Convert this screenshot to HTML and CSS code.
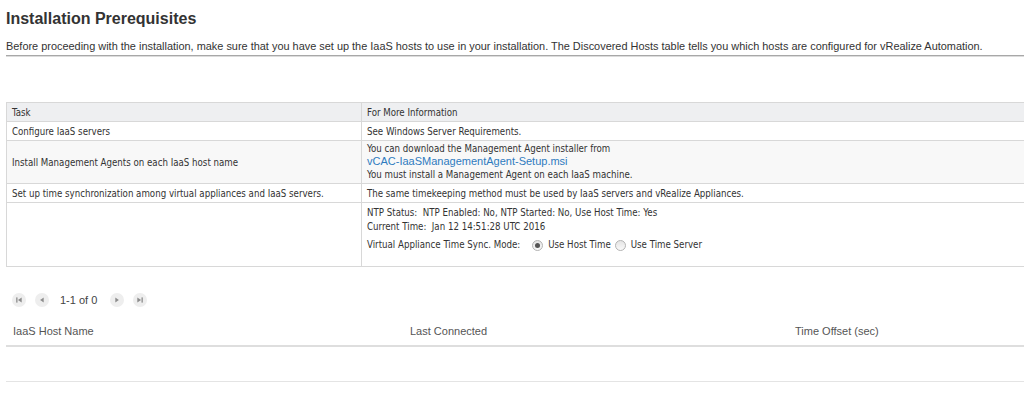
FILE: index.html
```html
<!DOCTYPE html>
<html>
<head>
<meta charset="utf-8">
<link rel="stylesheet" href="styles.css">
</head>
<body>
<main class="page">
  <h1 class="title">Installation Prerequisites</h1>
  <p class="intro">Before proceeding with the installation, make sure that you have set up the IaaS hosts to use in your installation. The Discovered Hosts table tells you which hosts are configured for vRealize Automation.</p>
  <hr class="rule">

  <table class="prereq">
    <thead>
      <tr><th class="col-task">Task</th><th>For More Information</th></tr>
    </thead>
    <tbody>
      <tr><td>Configure IaaS servers</td><td>See Windows Server Requirements.</td></tr>
      <tr class="alt">
        <td>Install Management Agents on each IaaS host name</td>
        <td class="multi">You can download the Management Agent installer from<br><a class="link" href="#">vCAC-IaaSManagementAgent-Setup.msi</a><br>You must install a Management Agent on each IaaS machine.</td>
      </tr>
      <tr><td>Set up time synchronization among virtual appliances and IaaS servers.</td><td>The same timekeeping method must be used by IaaS servers and vRealize Appliances.</td></tr>
      <tr class="ntp">
        <td></td>
        <td>
          <div class="ntp-line">NTP Status:&nbsp; NTP Enabled: No, NTP Started: No, Use Host Time: Yes</div>
          <div class="ntp-line">Current Time:&nbsp; Jan 12 14:51:28 UTC 2016</div>
          <div class="ntp-line sync">
            <span class="sync-label">Virtual Appliance Time Sync. Mode:</span>
            <span class="radio checked"></span><span class="radio-text">Use Host Time</span>
            <span class="radio"></span><span class="radio-text">Use Time Server</span>
          </div>
        </td>
      </tr>
    </tbody>
  </table>

  <div class="pager">
    <span class="pbtn"><svg viewBox="0 0 10 10" width="10" height="10"><rect x="2.2" y="2.4" width="1.3" height="5.2" fill="#8c8c8c"/><path d="M7.7 2.4 L3.9 5 L7.7 7.6 Z" fill="#8c8c8c"/></svg></span>
    <span class="pbtn"><svg viewBox="0 0 10 10" width="10" height="10"><path d="M6.7 2.4 L3.1 5 L6.7 7.6 Z" fill="#8c8c8c"/></svg></span>
    <span class="pcount">1-1 of 0</span>
    <span class="pbtn"><svg viewBox="0 0 10 10" width="10" height="10"><path d="M3.3 2.4 L6.9 5 L3.3 7.6 Z" fill="#8c8c8c"/></svg></span>
    <span class="pbtn"><svg viewBox="0 0 10 10" width="10" height="10"><path d="M2.3 2.4 L6.1 5 L2.3 7.6 Z" fill="#8c8c8c"/><rect x="6.5" y="2.4" width="1.3" height="5.2" fill="#8c8c8c"/></svg></span>
  </div>

  <div class="hosts">
    <div class="hosts-head">
      <span class="h-name">IaaS Host Name</span>
      <span class="h-last">Last Connected</span>
      <span class="h-offset">Time Offset (sec)</span>
    </div>
    <div class="hosts-empty"></div>
  </div>
</main>
</body>
</html>
```

FILE: styles.css
```css
html, body {
  margin: 0;
  padding: 0;
  background: #fff;
  overflow: hidden;
}

.page {
  width: 1030px;
  padding-left: 6px;
  font-family: "Liberation Sans", Arial, sans-serif;
  color: #333;
}

.title {
  margin: 0;
  padding-top: 9px;
  font-size: 16px;
  font-weight: bold;
  line-height: 19px;
  color: #333;
}

.intro {
  margin: 0;
  padding-top: 12px;
  font-size: 10.93px;
  line-height: 13px;
  color: #333;
}

.rule {
  margin: 2px 0 0 0;
  border: 0;
  border-top: 1px solid #a8a8a8;
  border-bottom: 1px solid #dcdcdc;
  height: 0;
}

.prereq {
  margin-top: 45px;
  width: 1030px;
  border-collapse: collapse;
  font-family: "DejaVu Sans Condensed", "DejaVu Sans", sans-serif;
  font-size: 9.65px;
  color: #333;
  border: 1px solid #d8d8d8;
}

.prereq th,
.prereq td {
  border: 1px solid #d8d8d8;
  padding: 0 5px;
  text-align: left;
  font-weight: normal;
  height: 18px;
  vertical-align: middle;
}

.prereq th {
  background: #eeeff1;
}

.col-task {
  width: 344px;
}

.prereq tr.alt td {
  background: #f8f8f8;
  height: 42px;
}

.multi {
  line-height: 12.5px;
}

.link {
  color: #2f7bbf;
  text-decoration: none;
  font-family: "Liberation Sans", Arial, sans-serif;
  font-size: 11px;
}

.prereq tr.ntp td {
  vertical-align: top;
  height: 60px;
  padding-top: 3px;
}

.ntp-line {
  line-height: 14px;
}

.sync {
  display: flex;
  align-items: center;
  margin-top: 4px;
}

.sync-label {
  margin-right: 12px;
}

.radio {
  width: 9px;
  height: 9px;
  border-radius: 50%;
  border: 1px solid #b4b4b4;
  background: linear-gradient(#e4e4e4, #fafafa);
  margin-right: 5px;
  position: relative;
}

.radio.checked::after {
  content: "";
  position: absolute;
  left: 2px;
  top: 2px;
  width: 5px;
  height: 5px;
  border-radius: 50%;
  background: #555;
}

.radio-text {
  margin-right: 4px;
}

.pager {
  display: flex;
  align-items: center;
  margin-top: 26px;
  padding-left: 6px;
  height: 14px;
  font-size: 11px;
  color: #444;
}

.pbtn {
  width: 14px;
  height: 14px;
  border-radius: 50%;
  background: #eeeeee;
  display: inline-flex;
  align-items: center;
  justify-content: center;
  margin-right: 9px;
}

.pcount {
  margin: 0 13px 0 2px;
}

.hosts {
  margin-top: 16px;
  width: 1030px;
  font-size: 11px;
  color: #555;
}

.hosts-head {
  display: flex;
  height: 20px;
  padding-top: 2px;
  border-bottom: 2px solid #dedede;
}

.h-name {
  padding-left: 7px;
  width: 397px;
}

.h-last {
  width: 385px;
}

.hosts-empty {
  height: 34px;
  border-bottom: 1px solid #e4e4e4;
}
```
